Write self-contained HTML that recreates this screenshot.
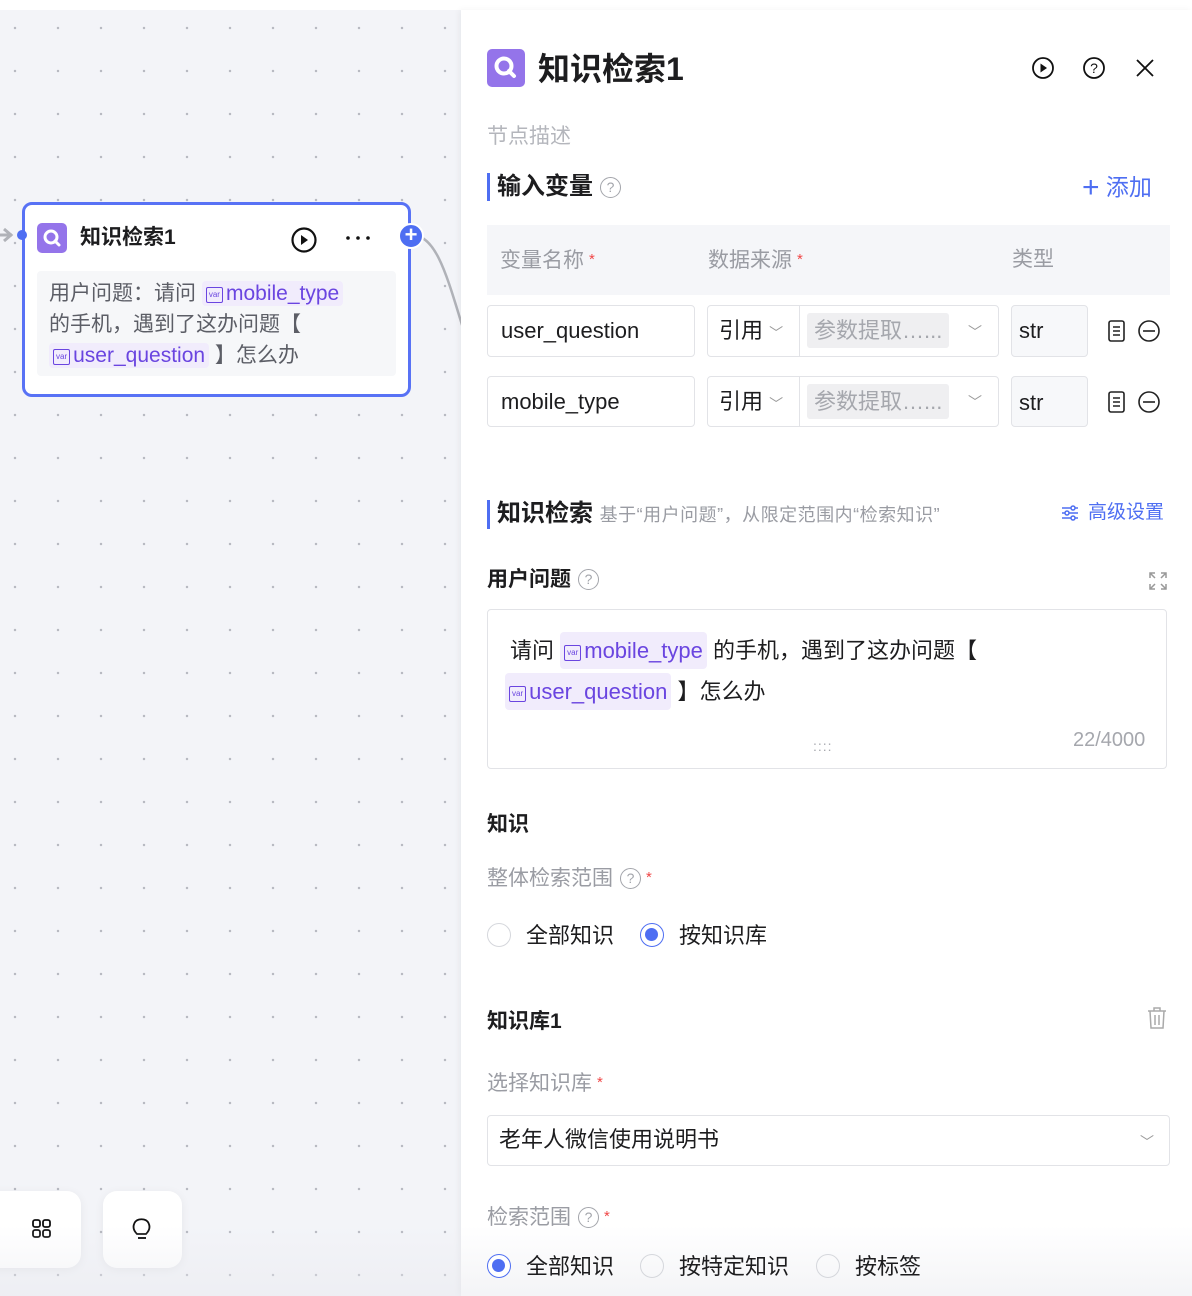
<!DOCTYPE html>
<html><head><meta charset="utf-8"><style>
*{margin:0;padding:0;box-sizing:border-box}
body{width:1192px;height:1296px;position:relative;overflow:hidden;font-family:"Liberation Sans","Noto Sans CJK SC",sans-serif;background:#fff;color:#1d1d1f}
.a{position:absolute;white-space:nowrap}
#canvas{position:absolute;left:0;top:10px;width:461px;height:1286px;background-color:#f3f4f8;background-image:radial-gradient(circle,#b8bac2 1.1px,transparent 1.4px);background-size:43px 43px;background-position:-6.5px -3.5px}
#panel{position:absolute;left:461px;top:10px;width:731px;height:1286px;background:#fff;box-shadow:-2px 0 6px rgba(0,0,0,.05)}
.tag{background:#f1ecfc;color:#6a45e0;border-radius:4px;padding:1px 4px}
.var{display:inline-block;border:1.3px solid #6a45e0;border-radius:2px;font-size:8px;line-height:1;padding:3px 2px;vertical-align:3px;color:#6a45e0;margin-right:3px}
.box{position:absolute;border:1px solid #e2e3e7;border-radius:4px;background:#fff}
.lbl{color:#9a9ca3;font-size:21px}
.star{color:#f04646;font-size:15px;vertical-align:3px;margin-left:5px}
.q{display:inline-block;width:21px;height:21px;border:1.3px solid #a3a5ab;border-radius:50%;font-size:14px;line-height:19px;text-align:center;color:#a3a5ab;vertical-align:2px;margin-left:7px}
.h{font-size:24px;font-weight:bold;color:#1d1d1f}
.bar{border-left:3px solid #4e6ef2;padding-left:7px}
.radio{position:absolute;width:24px;height:24px;border-radius:50%;border:1px solid #d5d7dc;background:#fff}
.radio.on{border:1.5px solid #4e6ef2}
.radio.on:after{content:"";position:absolute;left:4px;top:4px;width:13px;height:13px;border-radius:50%;background:#4e6ef2}
.rt{font-size:22px;color:#1d1d1f}
</style></head><body>
<div id="canvas"></div>
<svg class="a" style="left:0;top:200px" width="470" height="150"><path d="M0 35 L12 35" stroke="#b0b2b8" stroke-width="3"/><path d="M4 29 L11 35 L4 41" stroke="#b0b2b8" stroke-width="3" fill="none"/><path d="M412 35 C440 35 450 90 470 150" stroke="#b0b2b8" stroke-width="2.5" fill="none"/></svg>
<div class="a" style="left:22px;top:202px;width:389px;height:195px;background:#fff;border:3px solid #5872f5;border-radius:10px"></div>
<div class="a" style="left:17px;top:230px;width:10px;height:10px;border-radius:50%;background:#4e6ef2"></div>
<div class="a" style="left:398px;top:223px;width:26px;height:26px;border-radius:50%;background:#4e6ef2;border:2px solid #fff;color:#fff;font-size:22px;line-height:20px;text-align:center;font-weight:bold">+</div>
<div class="a" style="left:37px;top:223px;width:30px;height:30px;border-radius:5px;background:#9474ea"></div>
<svg class="a" style="left:37px;top:223px" width="30" height="30"><circle cx="14" cy="14" r="6" stroke="#fff" stroke-width="3" fill="none"/><path d="M18 18 L22 22" stroke="#fff" stroke-width="3" stroke-linecap="round"/></svg>
<div class="a" style="left:80px;top:223px;font-size:21px;line-height:30px;font-weight:bold">知识检索1</div>
<svg class="a" style="left:290px;top:226px" width="28" height="28"><circle cx="14" cy="14" r="11.5" stroke="#111" stroke-width="2.2" fill="none"/><path d="M11 9 L18 14 L11 19Z" fill="#111"/></svg>
<svg class="a" style="left:344px;top:234px" width="30" height="8"><circle cx="4" cy="4" r="1.8" fill="#111"/><circle cx="14" cy="4" r="1.8" fill="#111"/><circle cx="24" cy="4" r="1.8" fill="#111"/></svg>
<div class="a" style="left:37px;top:271px;width:359px;height:105px;background:#f6f7f9;border-radius:4px"></div>
<div class="a" style="left:49px;top:278px;font-size:21px;line-height:31px;color:#5c5e66;white-space:normal;width:345px">用户问题：请问 <span class="tag"><span class="var">var</span>mobile_type</span><br>的手机，遇到了这办问题【<br><span class="tag"><span class="var">var</span>user_question</span> 】怎么办</div>
<div class="a" style="left:-20px;top:1191px;width:101px;height:77px;background:#fff;border-radius:14px;box-shadow:0 2px 10px rgba(0,0,0,.06)"></div>
<svg class="a" style="left:31px;top:1218px" width="22" height="22"><rect x="2" y="2" width="7" height="7" rx="2" stroke="#111" stroke-width="1.8" fill="none"/><rect x="12" y="2" width="7" height="7" rx="2" stroke="#111" stroke-width="1.8" fill="none"/><rect x="2" y="12" width="7" height="7" rx="2" stroke="#111" stroke-width="1.8" fill="none"/><rect x="12" y="12" width="7" height="7" rx="2" stroke="#111" stroke-width="1.8" fill="none"/></svg>
<div class="a" style="left:103px;top:1191px;width:79px;height:77px;background:#fff;border-radius:14px;box-shadow:0 2px 10px rgba(0,0,0,.06)"></div>
<svg class="a" style="left:131px;top:1217px" width="22" height="26"><path d="M6 17 C2 13 2 9 3.5 6 C6 1 15 1 17.5 6 C19 9 19 13 15 17 Z" stroke="#111" stroke-width="1.8" fill="none"/><path d="M7 21 L15 21" stroke="#111" stroke-width="2"/></svg>
<div id="panel"></div>
<div class="a" style="left:487px;top:49px;width:38px;height:38px;border-radius:5px;background:#9474ea"></div>
<svg class="a" style="left:487px;top:49px" width="38" height="38"><circle cx="17" cy="17" r="7.5" stroke="#fff" stroke-width="4" fill="none"/><path d="M22 22 L27 27" stroke="#fff" stroke-width="4" stroke-linecap="round"/></svg>
<div class="a" style="left:538px;top:48px;font-size:32px;line-height:42px;font-weight:bold">知识检索1</div>
<svg class="a" style="left:1031px;top:56px" width="24" height="24"><circle cx="12" cy="12" r="10" stroke="#111" stroke-width="1.8" fill="none"/><path d="M9.5 7.5 L16 12 L9.5 16.5Z" fill="#111"/></svg>
<svg class="a" style="left:1082px;top:56px" width="24" height="24"><circle cx="12" cy="12" r="10" stroke="#111" stroke-width="1.8" fill="none"/><text x="12" y="17" font-size="14" text-anchor="middle" font-family="Liberation Sans" fill="#111">?</text></svg>
<svg class="a" style="left:1134px;top:57px" width="22" height="22"><path d="M3 3 L19 19 M19 3 L3 19" stroke="#111" stroke-width="1.8"/></svg>
<div class="a lbl" style="left:487px;top:123px;line-height:28px;color:#b4b6bc">节点描述</div>
<div class="a h bar" style="left:487px;top:173px;line-height:28px">输入变量<span class="q" style="font-weight:normal">?</span></div>
<div class="a" style="left:1082px;top:172px;font-size:23px;color:#4e6ef2;line-height:30px"><span style="font-size:30px;font-weight:300;vertical-align:-2px">+</span> 添加</div>
<div class="a" style="left:487px;top:225px;width:683px;height:70px;background:#f5f6f9"></div>
<div class="a lbl" style="left:500px;top:246px;line-height:28px">变量名称<span class="star">*</span></div>
<div class="a lbl" style="left:708px;top:246px;line-height:28px">数据来源<span class="star">*</span></div>
<div class="a lbl" style="left:1012px;top:246px;line-height:28px">类型</div>
<div class="box" style="left:487px;top:305px;width:208px;height:52px"></div>
<div class="a" style="left:501px;top:317px;font-size:22px;line-height:28px">user_question</div>
<div class="box" style="left:707px;top:305px;width:292px;height:52px"></div>
<div class="a" style="left:799px;top:306px;width:1px;height:50px;background:#e2e3e7"></div>
<div class="a" style="left:719px;top:317px;font-size:22px;line-height:28px">引用 <span style="color:#999;font-size:14px">﹀</span></div>
<div class="a" style="left:807px;top:313px;width:142px;height:35px;background:#efeff1;border-radius:3px"></div>
<div class="a" style="left:814px;top:317px;font-size:22px;line-height:28px;color:#a5a7ad">参数提取…...</div>
<div class="a" style="left:968px;top:322px;font-size:14px;color:#999">﹀</div>
<div class="box" style="left:1011px;top:305px;width:77px;height:52px;background:#f7f8fa"></div>
<div class="a" style="left:1019px;top:317px;font-size:22px;line-height:28px">str</div>
<div class="box" style="left:487px;top:376px;width:208px;height:51px"></div>
<div class="a" style="left:501px;top:388px;font-size:22px;line-height:28px">mobile_type</div>
<div class="box" style="left:707px;top:376px;width:292px;height:51px"></div>
<div class="a" style="left:799px;top:377px;width:1px;height:49px;background:#e2e3e7"></div>
<div class="a" style="left:719px;top:388px;font-size:22px;line-height:28px">引用 <span style="color:#999;font-size:14px">﹀</span></div>
<div class="a" style="left:807px;top:384px;width:142px;height:35px;background:#efeff1;border-radius:3px"></div>
<div class="a" style="left:814px;top:388px;font-size:22px;line-height:28px;color:#a5a7ad">参数提取…...</div>
<div class="a" style="left:968px;top:392px;font-size:14px;color:#999">﹀</div>
<div class="box" style="left:1011px;top:376px;width:77px;height:51px;background:#f7f8fa"></div>
<div class="a" style="left:1019px;top:389px;font-size:22px;line-height:28px">str</div>
<svg class="a" style="left:1106px;top:319px" width="60" height="24"><rect x="3" y="2" width="15" height="20" rx="2" stroke="#222" stroke-width="1.6" fill="none"/><path d="M7 8h7M7 12h7M7 16h7" stroke="#222" stroke-width="1.5"/><circle cx="43" cy="12" r="10" stroke="#222" stroke-width="1.6" fill="none"/><path d="M37 12h12" stroke="#222" stroke-width="1.6"/></svg>
<svg class="a" style="left:1106px;top:390px" width="60" height="24"><rect x="3" y="2" width="15" height="20" rx="2" stroke="#222" stroke-width="1.6" fill="none"/><path d="M7 8h7M7 12h7M7 16h7" stroke="#222" stroke-width="1.5"/><circle cx="43" cy="12" r="10" stroke="#222" stroke-width="1.6" fill="none"/><path d="M37 12h12" stroke="#222" stroke-width="1.6"/></svg>
<div class="a h bar" style="left:487px;top:500px;line-height:28px">知识检索 <span style="font-size:18px;font-weight:normal;color:#9a9ca3;letter-spacing:0.5px">基于“用户问题”，从限定范围内“检索知识”</span></div>
<svg class="a" style="left:1060px;top:503px" width="20" height="20"><path d="M2 5h16M2 10h16M2 15h16" stroke="#4e6ef2" stroke-width="1.6"/><circle cx="13" cy="5" r="2" fill="#fff" stroke="#4e6ef2" stroke-width="1.5"/><circle cx="7" cy="10" r="2" fill="#fff" stroke="#4e6ef2" stroke-width="1.5"/><circle cx="13" cy="15" r="2" fill="#fff" stroke="#4e6ef2" stroke-width="1.5"/></svg>
<div class="a" style="left:1088px;top:499px;font-size:19px;color:#4e6ef2;line-height:28px">高级设置</div>
<div class="a" style="left:487px;top:566px;font-size:21px;font-weight:bold;line-height:28px">用户问题<span class="q" style="font-weight:normal">?</span></div>
<svg class="a" style="left:1148px;top:571px" width="20" height="20"><path d="M2 7V2h5M2 2l5 5M18 7V2h-5M18 2l-5 5M2 13v5h5M2 18l5-5M18 13v5h-5M18 18l-5-5" stroke="#999" stroke-width="1.5" fill="none"/></svg>
<div class="box" style="left:487px;top:609px;width:680px;height:160px"></div>
<div class="a" style="left:510px;top:630px;font-size:22px;line-height:41px;white-space:normal;width:650px">请问 <span class="tag" style="padding:6px 4px"><span class="var">var</span>mobile_type</span> 的手机，遇到了这办问题【<br><span class="tag" style="padding:6px 4px;margin-left:-5px"><span class="var">var</span>user_question</span> 】怎么办</div>
<div class="a" style="left:1073px;top:729px;font-size:20px;color:#a5a7ad">22/4000</div>
<div class="a" style="left:813px;top:742px;font-size:14px;color:#a5a7ad;letter-spacing:1px;line-height:8px">::::</div>
<div class="a" style="left:487px;top:811px;font-size:21px;font-weight:bold;line-height:28px">知识</div>
<div class="a lbl" style="left:487px;top:864px;line-height:28px">整体检索范围<span class="q">?</span><span class="star">*</span></div>
<div class="radio" style="left:487px;top:923px"></div><div class="a rt" style="left:526px;top:922px;line-height:28px">全部知识</div>
<div class="radio on" style="left:640px;top:923px"></div><div class="a rt" style="left:679px;top:922px;line-height:28px">按知识库</div>
<div class="a" style="left:487px;top:1008px;font-size:21px;font-weight:bold;line-height:28px">知识库1</div>
<svg class="a" style="left:1146px;top:1006px" width="22" height="24"><path d="M2 5h18M8 5V2h6v3M4 5l1 17h12l1-17M9 9v10M13 9v10" stroke="#aaa" stroke-width="1.5" fill="none"/></svg>
<div class="a lbl" style="left:487px;top:1069px;line-height:28px">选择知识库<span class="star">*</span></div>
<div class="box" style="left:487px;top:1115px;width:683px;height:51px"></div>
<div class="a" style="left:499px;top:1126px;font-size:22px;line-height:28px">老年人微信使用说明书</div>
<div class="a" style="left:1140px;top:1132px;font-size:14px;color:#999">﹀</div>
<div class="a lbl" style="left:487px;top:1203px;line-height:28px">检索范围<span class="q">?</span><span class="star">*</span></div>
<div class="a" style="left:0;top:1226px;width:1192px;height:70px;background:linear-gradient(to bottom,rgba(240,241,245,0),rgba(232,233,238,.5));pointer-events:none"></div>
<div class="radio on" style="left:487px;top:1254px"></div><div class="a rt" style="left:526px;top:1253px;line-height:28px">全部知识</div>
<div class="radio" style="left:640px;top:1254px;background:transparent"></div><div class="a rt" style="left:679px;top:1253px;line-height:28px">按特定知识</div>
<div class="radio" style="left:816px;top:1254px;background:transparent"></div><div class="a rt" style="left:855px;top:1253px;line-height:28px">按标签</div>
</body></html>
